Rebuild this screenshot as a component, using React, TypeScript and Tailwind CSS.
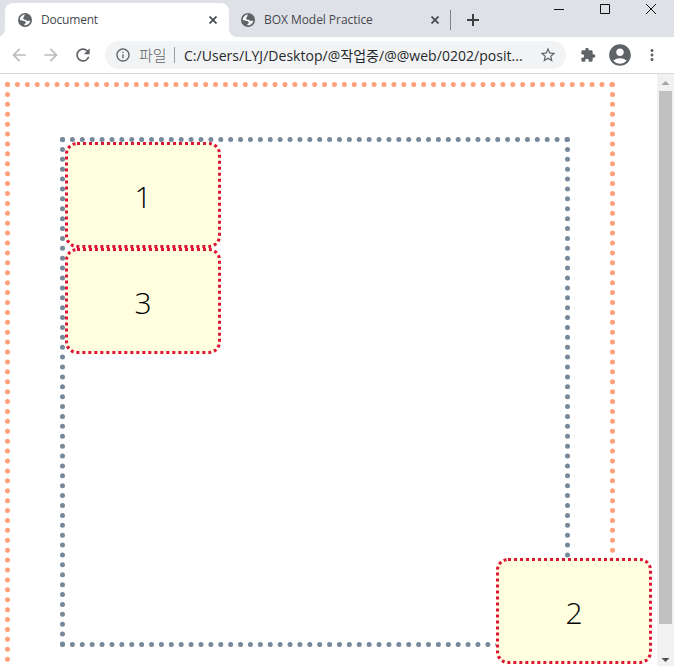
import React from 'react';
import { MdArrowBack, MdArrowForward, MdRefresh, MdInfoOutline, MdStarBorder, MdExtension, MdAccountCircle, MdMoreVert } from 'react-icons/md';

const ui = "font-['Open_Sans','Noto_Sans_CJK_KR',sans-serif]";

function Globe() {
  return (
    <svg className="h-[14px] w-[14px] shrink-0" viewBox="0 0 14 14">
      <circle cx="7" cy="7" r="7" fill="#5f6368" />
      <path d="M7.6 1.6C6.4 2 6 3 6.2 3.8C5 4.4 5 5.4 5.6 6.2C6.6 7.2 8 6.4 8.8 7.4C9.4 8.2 10.2 8 11 7.8L12.3 7.7A5.3 5.3 0 0 1 6.3 12.3L6.4 10.9C7.4 10.7 8.2 10 7.6 9C6.8 8 5 8.4 4.2 7.6L1.7 7A5.4 5.4 0 0 1 7.6 1.6Z" fill="white" fillOpacity=".95" />
    </svg>
  );
}

function Cross({ className }: { className: string }) {
  return (
    <svg className={className} viewBox="0 0 8 8" fill="none" stroke="#45494d" strokeWidth="1.7">
      <path d="M.5.5l7 7M7.5.5l-7 7" />
    </svg>
  );
}

function TabStrip() {
  return (
    <div className="flex h-[37px] bg-[#dee1e6] pl-[5px]">
      <div className="relative mt-[3px] flex h-[34px] w-[224px] items-center rounded-t-lg bg-white pl-[13px]">
        <svg className="absolute bottom-0 -left-[8px] h-2 w-2" viewBox="0 0 8 8"><path d="M8 0v8H0a8 8 0 0 0 8-8" fill="white" /></svg>
        <svg className="absolute bottom-0 -right-[8px] h-2 w-2" viewBox="0 0 8 8"><path d="M0 0v8h8a8 8 0 0 1-8-8" fill="white" /></svg>
        <Globe />
        <span className="ml-[9px] w-[162px] text-[12px] tracking-[-0.2px] text-[#45494d]">Document</span>
        <Cross className="ml-[6px] h-2 w-2" />
      </div>
      <div className="mt-[3px] flex h-[34px] w-[222px] items-center pl-[12px]">
        <Globe />
        <span className="ml-[9px] w-[162px] text-[12px] tracking-[-0.05px] text-[#45494d]">BOX Model Practice</span>
        <Cross className="ml-[5px] h-2 w-2" />
        <span className="ml-[11px] h-5 w-px shrink-0 bg-[#808388]" />
      </div>
      <svg className="mt-[14px] ml-[16px] h-3 w-3" viewBox="0 0 12 12" stroke="#3c4043" strokeWidth="2"><path d="M6 0v12M0 6h12" /></svg>
      <svg className="mt-[4px] ml-[75px] h-[11px] w-[104px]" viewBox="0 0 104 11" fill="none" stroke="#111">
        <path d="M0 5.5h10M46.500.5h9v9h-9z" />
        <path d="M92 0l10 10M102 0L92 10" />
      </svg>
    </div>
  );
}

function Toolbar() {
  return (
    <div className="flex h-[37px] items-center border-b border-[#d6d8da] bg-white pl-[9px]">
      <MdArrowBack className="h-5 w-5 shrink-0 text-[#babcbe]" />
      <MdArrowForward className="ml-[12px] h-5 w-5 shrink-0 text-[#babcbe]" />
      <MdRefresh className="ml-[12px] h-5 w-5 shrink-0 text-[#5f6368]" />
      <div className="ml-[12px] flex h-7 w-[461px] shrink-0 items-center rounded-full bg-[#f1f3f4] pl-[10px] whitespace-nowrap">
        <MdInfoOutline className="h-4 w-4 shrink-0 text-[#5f6368]" />
        <span className="ml-2 w-[35px] shrink-0 text-[15px] font-light text-[#5f6368]">파일</span>
        <span className="h-4 w-px shrink-0 bg-[#9a9da1]" />
        <span className="ml-[9px] w-[345px] shrink-0 text-[14px] tracking-[0.03px] text-[#25282b]">C:/Users/LYJ/Desktop/@작업중/@@web/0202/posit...</span>
        <MdStarBorder className="ml-[10px] h-[18px] w-[18px] shrink-0 text-[#5f6368]" />
      </div>
      <MdExtension className="ml-[14px] h-4 w-4 shrink-0 text-[#5f6368]" />
      <MdAccountCircle className="ml-[11px] h-[26px] w-[26px] shrink-0 text-[#5f6368]" />
      <MdMoreVert className="ml-[10px] h-[18px] w-[18px] shrink-0 text-[#5f6368]" />
    </div>
  );
}

function Box({ label, className = '' }: { label: string; className?: string }) {
  return (
    <div className={`h-[106px] w-[156px] rounded-[12px] border-[3px] border-dotted border-[#dc143c] bg-[#ffffe0] pt-[2px] text-center text-[30px] leading-[100px] font-[350] text-black ${className}`}>
      {label}
    </div>
  );
}

export default function App() {
  return (
    <div className={`flex h-[666px] w-[674px] flex-col overflow-hidden bg-white ${ui}`}>
      <TabStrip />
      <Toolbar />
      <div className="flex h-[592px]">
        <main className="relative h-full w-[657px] overflow-hidden pt-2 pl-[5px]">
          <div className="h-[610px] w-[610px] border-[5px] border-dotted border-[#ffa07a] p-[50px]">
            <div className="h-[510px] w-[510px] border-[5px] border-dotted border-[#778899]">
              <Box label="1" />
              <Box label="3" />
              <Box label="2" className="absolute top-[484px] left-[496px]" />
            </div>
          </div>
        </main>
        <div className="flex h-full w-[17px] flex-col items-center bg-[#f1f1f1]">
          <svg className="h-[17px] w-[17px] shrink-0" viewBox="0 0 17 17"><path d="M4.500 11h8L8.500 7z" fill="#a3a3a3" /></svg>
          <div className="-ml-px h-[533px] w-[13px] bg-[#c1c1c1]" />
          <svg className="mt-auto h-[17px] w-[17px]" viewBox="0 0 17 17"><path d="M4.500 9h8l-4 4z" fill="#505050" /></svg>
        </div>
      </div>
    </div>
  );
}
